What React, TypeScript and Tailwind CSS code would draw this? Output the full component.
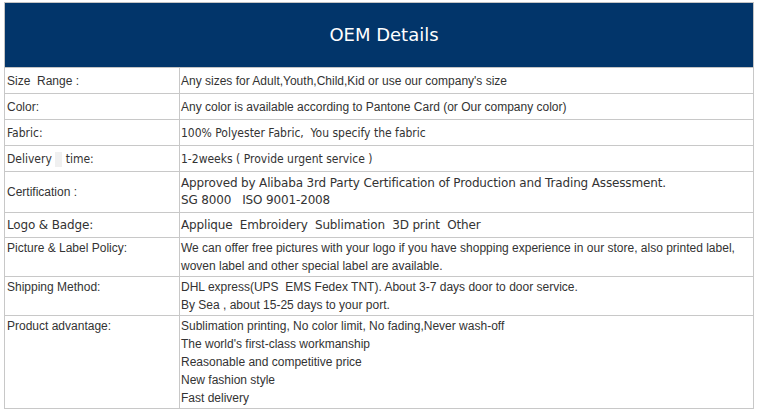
const arial = "font-['Liberation_Sans',Arial,sans-serif]";
const tahoma = "font-['DejaVu_Sans_Condensed','DejaVu_Sans',sans-serif]";
const verdana = "font-['DejaVu_Sans',Verdana,sans-serif] tracking-[-0.15px]";

type Row = {
  label: React.ReactNode;
  labelFont: string;
  labelTop?: boolean;
  value: React.ReactNode;
  valueFont: string;
  h: string;
};

const rows: Row[] = [
  {
    label: "Size\u00a0 Range :",
    labelFont: arial,
    value: "Any sizes for Adult,Youth,Child,Kid or use our company's size",
    valueFont: arial,
    h: "h-[26px]",
  },
  {
    label: "Color:",
    labelFont: arial,
    value: "Any color is available according to Pantone Card (or Our company color)",
    valueFont: arial,
    h: "h-[26px]",
  },
  {
    label: "Fabric:",
    labelFont: tahoma,
    value: "100% Polyester Fabric,\u00a0 You specify the fabric",
    valueFont: tahoma,
    h: "h-[26px]",
  },
  {
    label: (
      <>
        Delivery <span className="inline-block w-[7px] h-[15px] align-middle bg-[#f0f0f0]" /> time:
      </>
    ),
    labelFont: tahoma,
    value: "1-2weeks ( Provide urgent service )",
    valueFont: tahoma,
    h: "h-[26px]",
  },
  {
    label: "Certification :",
    labelFont: arial,
    value: (
      <>
        Approved by Alibaba 3rd Party Certification of Production and Trading Assessment.
        <br />
        SG 8000&nbsp;&nbsp; ISO 9001-2008
      </>
    ),
    valueFont: verdana + " leading-[17px]",
    h: "h-[41px]",
  },
  {
    label: "Logo & Badge:",
    labelFont: verdana,
    value: "Applique\u00a0 Embroidery\u00a0 Sublimation\u00a0 3D print\u00a0 Other",
    valueFont: verdana,
    h: "h-[25px]",
  },
  {
    label: "Picture & Label Policy:",
    labelFont: arial,
    labelTop: true,
    value: (
      <>
        We can offer free pictures with your logo if you have shopping experience in our store, also printed label,
        <br />
        woven label and other special label are available.
      </>
    ),
    valueFont: arial,
    h: "h-[39px]",
  },
  {
    label: "Shipping Method:",
    labelFont: arial,
    labelTop: true,
    value: (
      <>
        DHL express(UPS&nbsp; EMS Fedex TNT). About 3-7 days door to door service.
        <br />
        By Sea , about 15-25 days to your port.
      </>
    ),
    valueFont: arial,
    h: "h-[39px]",
  },
  {
    label: "Product advantage:",
    labelFont: arial,
    labelTop: true,
    value: (
      <>
        Sublimation printing, No color limit, No fading,Never wash-off
        <br />
        The world's first-class workmanship
        <br />
        Reasonable and competitive price
        <br />
        New fashion style
        <br />
        Fast delivery
      </>
    ),
    valueFont: arial,
    h: "h-[93px]",
  },
];

export default function App() {
  return (
    <div className="w-[758px] h-[413px] bg-white pt-[2px] pl-[4px]">
      <table className="w-[750px] border-collapse text-[12px] leading-[18px] text-[#333]">
        <tbody>
          <tr className="h-[65px]">
            <td
              colSpan={2}
              className="bg-[#02356a] border border-[#c4c4c4] pl-[10px] text-center align-middle text-white text-[18px] font-['DejaVu_Sans',Verdana,sans-serif]"
            >
              OEM Details
            </td>
          </tr>
          {rows.map((r, i) => (
            <tr key={i} className={r.h}>
              <td
                className={`w-[175px] border border-[#c8c8c8] pl-[2px] pr-1 py-0 ${r.labelTop ? "align-top pt-[1px]" : "align-middle"} ${r.labelFont}`}
              >
                {r.label}
              </td>
              <td className={`border border-[#c8c8c8] pl-[1px] pr-1 py-0 align-middle ${r.valueFont}`}>{r.value}</td>
            </tr>
          ))}
        </tbody>
      </table>
    </div>
  );
}
